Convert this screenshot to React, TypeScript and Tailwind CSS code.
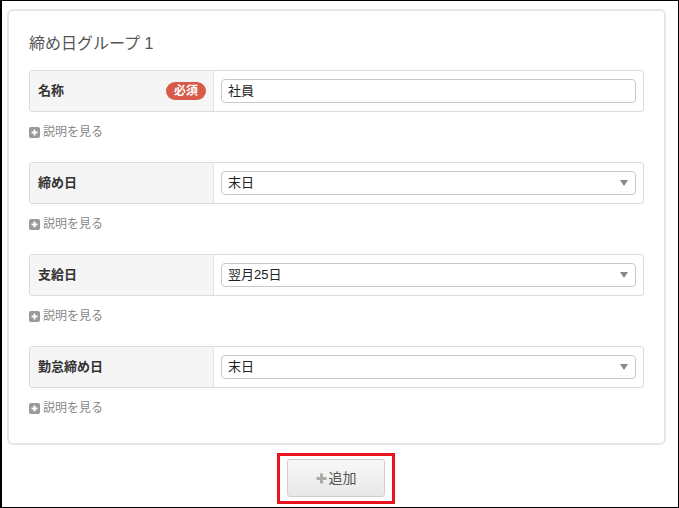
import React from 'react';

const font = { fontFamily: '"Liberation Sans", "Noto Sans CJK JP", sans-serif' };

function Help() {
    return (
        <div className="flex items-center h-[14px] mt-[13px] mb-[23px] text-[12px] text-[#888]">
            <span className="w-[11px] h-[11px] rounded-[2px] bg-[#999] flex items-center justify-center mr-[3px]">
                <svg width="9" height="9" viewBox="0 0 9 9">
                    <path d="M4.5 1.5v6M1.5 4.5h6" stroke="#fff" strokeWidth="1.8" />
                </svg>
            </span>
            説明を見る
        </div>
    );
}

function Row({ label, value, required, select }: { label: string; value: string; required?: boolean; select?: boolean }) {
    return (
        <div className="flex h-[42px] border border-[#dcdcdc] rounded-[3px] overflow-hidden">
            <div className="w-[184px] shrink-0 bg-[#f5f5f5] border-r border-[#e4e4e4] flex items-center justify-between pl-[8px] pr-[7px]">
                <span className="text-[13px] font-bold text-[#333]">{label}</span>
                {required && (
                    <span className="h-[18px] px-[8px] rounded-full bg-[#d75a4a] text-white text-[12px] font-bold flex items-center">必須</span>
                )}
            </div>
            <div className="flex-1 flex items-center pl-[7px] pr-[7px]">
                <div className="flex-1 h-[24px] border border-[#c8c8c8] rounded-[4px] bg-white flex items-center justify-between px-[6px] text-[13px] text-[#222]">
                    <span>{value}</span>
                    {select && (
                        <svg width="8" height="6" viewBox="0 0 8 6" className="mr-[1px]">
                            <path d="M0 0h8L4 6z" fill="#888" />
                        </svg>
                    )}
                </div>
            </div>
        </div>
    );
}

export default function App() {
    return (
        <div className="w-[679px] h-[508px] border border-l-2 border-black bg-white relative" style={font}>
            <div className="ml-[5px] mt-[8px] w-[659px] h-[436px] border-2 border-[#e6e6e6] rounded-[6px] px-[20px] pt-[21px]">
                <h2 className="text-[16px] text-[#555] leading-[24px] mb-[14px]">締め日グループ 1</h2>
                <Row label="名称" value="社員" required />
                <Help />
                <Row label="締め日" value="末日" select />
                <Help />
                <Row label="支給日" value="翌月25日" select />
                <Help />
                <Row label="勤怠締め日" value="末日" select />
                <Help />
            </div>
            <div className="flex justify-center mt-[8px] pr-[8px]">
                <div className="border-[3px] border-[#e8141c] px-[7px] pt-[3px] pb-[4px]">
                    <button className="w-[98px] h-[38px] rounded-[3px] border border-[#cfcfcf] bg-gradient-to-b from-[#f8f8f8] to-[#e8e8e8] flex items-center justify-center text-[14px] text-[#555]">
                        <svg width="11" height="11" viewBox="0 0 11 11" className="mr-[2px]">
                            <path d="M5.5 0.5v10M0.5 5.5h10" stroke="#aaa" strokeWidth="3" />
                        </svg>
                        追加
                    </button>
                </div>
            </div>
        </div>
    );
}
